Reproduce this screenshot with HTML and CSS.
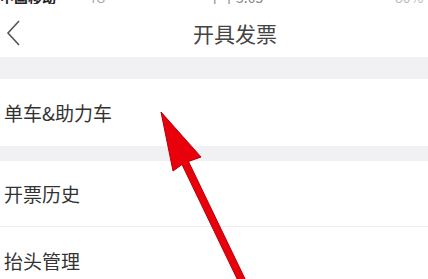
FILE: index.html
```html
<!DOCTYPE html>
<html lang="zh">

<head>
    <meta charset="UTF-8">
    <meta name="viewport" content="width=device-width, initial-scale=1.0">
    <title>开具发票</title>
    <link rel="stylesheet" href="styles.css">
</head>

<body>
    <div class="page">
        <div class="status">
            <span class="st st-left">中国移动</span>
            <span class="st st-left2">4G</span>
            <span class="st st-mid">下午3:05</span>
            <span class="st st-right">80%</span>
        </div>

        <div class="header">
            <svg class="back" width="16" height="28" viewBox="0 0 16 28">
                <polyline points="13,1 2,13 13,25" fill="none" stroke="#555" stroke-width="1.6"/>
            </svg>
            <div class="title">开具发票</div>
        </div>

        <div class="band"></div>
        <div class="row row-tall">单车&amp;助力车</div>
        <div class="band band-small"></div>
        <div class="row">开票历史</div>
        <div class="divider"></div>
        <div class="row row-tall">抬头管理</div>

        <svg class="arrow" width="428" height="279" viewBox="0 0 428 279">
            <polygon points="161,112 201,157 188.5,161.5 247.5,284 241,287 182,164.5 173,171"
                fill="#e8000a" stroke="#b3000a" stroke-width="1" stroke-linejoin="round"/>
        </svg>
    </div>
</body>

</html>
```

FILE: styles.css
```css
body {
    margin: 0;
    background-color: #fff;
    font-family: "Noto Sans CJK SC", "Noto Sans", sans-serif;
    color: #333;
    overflow: hidden;
}

.page {
    position: relative;
    width: 428px;
    height: 279px;
    overflow: hidden;
}

.status {
    height: 4px;
    display: flex;
    overflow: hidden;
    font-size: 14px;
    line-height: 14px;
}

.st {
    margin-top: -10px;
    height: 14px;
}

.st-left {
    color: #222;
    width: 88px;
    font-weight: bold;
}

.st-left2 {
    color: #aaa;
    width: 120px;
}

.st-mid {
    color: #888;
    width: 187px;
}

.st-right {
    color: #bbb;
}

.header {
    height: 53px;
    box-sizing: border-box;
    padding-top: 7px;
    display: flex;
    align-items: center;
    padding-left: 6px;
}

.back {
    flex: none;
}

.title {
    flex: 1;
    text-align: center;
    font-size: 21px;
    color: #444;
    padding-left: 20px;
    margin-top: -2px;
}

.band {
    height: 22px;
    background-color: #f1f1f4;
}

.band-small {
    height: 15px;
}

.row {
    height: 65px;
    display: flex;
    align-items: center;
    padding-left: 4px;
    font-size: 19px;
    color: #333;
}

.row-tall {
    height: 67px;
}

.divider {
    height: 1px;
    background-color: #ececef;
}

.arrow {
    position: absolute;
    left: 0;
    top: 0;
}
```
